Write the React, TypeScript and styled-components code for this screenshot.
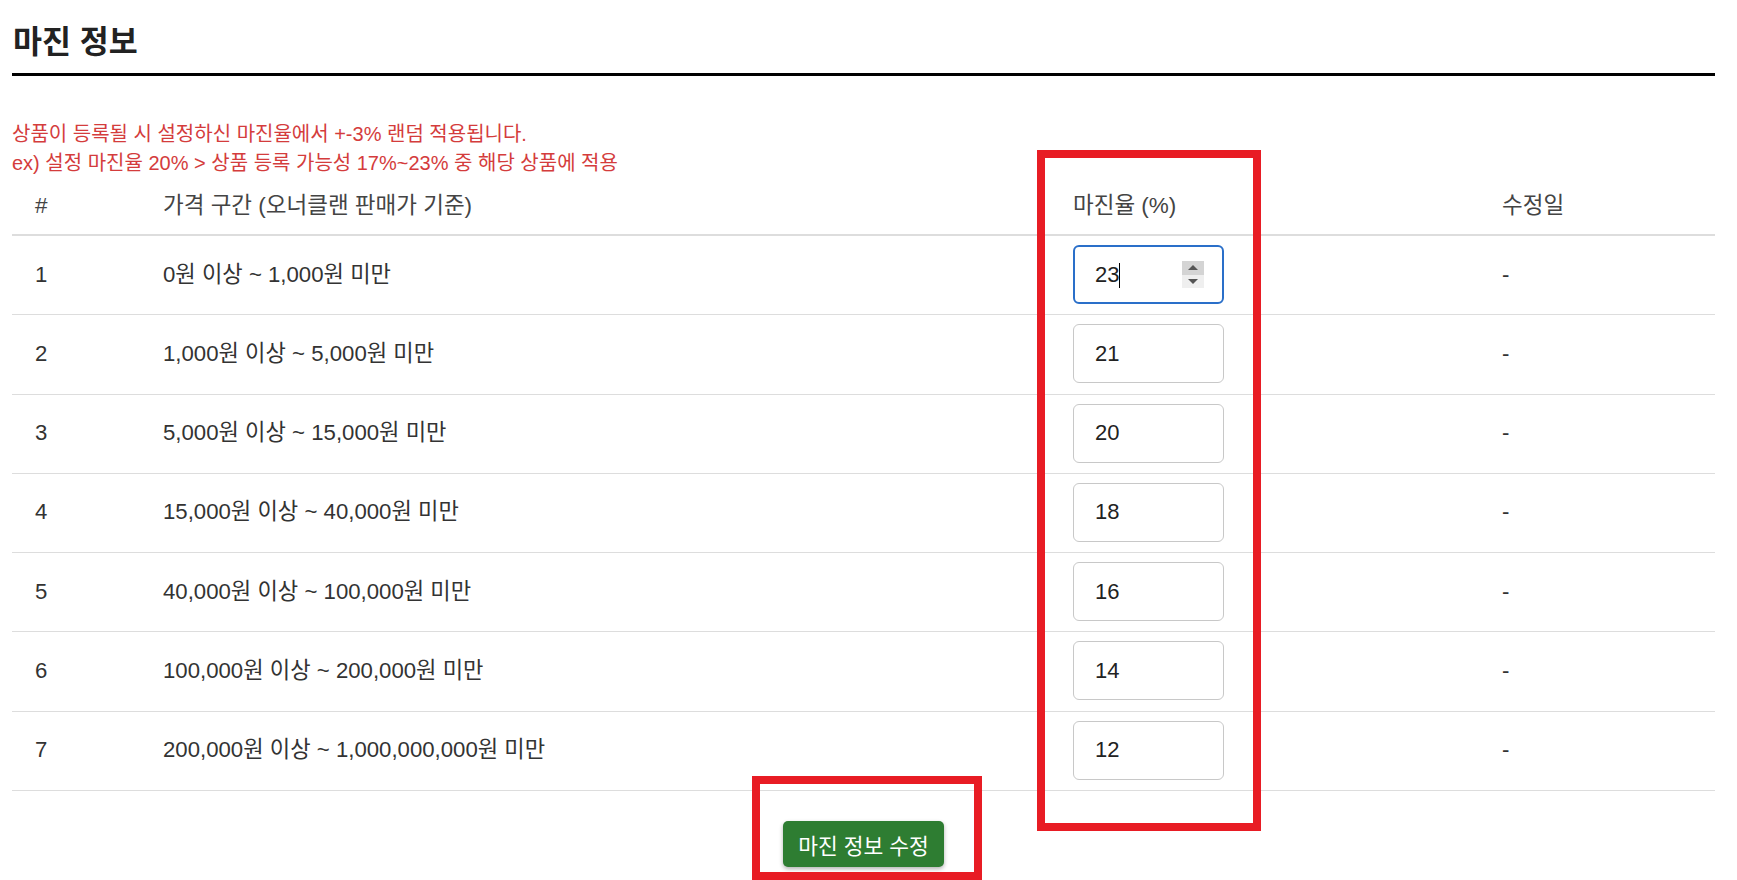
import styled, { createGlobalStyle } from 'styled-components';

const GlobalStyle = createGlobalStyle`
  body {
    margin: 0;
    background: #fff;
    font-family: "Liberation Sans", "Noto Sans CJK KR", sans-serif;
    color: #333;
  }
`;

const Page = styled.div`
  position: relative;
  width: 1703px;
  min-height: 880px;
  padding: 0 22px 0 12px;
`;

const Title = styled.h2`
  margin: 0;
  padding: 24px 0 13px 1px;
  font-size: 31.5px;
  line-height: 36px;
  font-weight: 700;
  color: #222;
  border-bottom: 3px solid #000;
`;

const Notice = styled.div`
  margin-top: 44px;
  color: #d43c3c;
  font-size: 20px;
  line-height: 29px;
`;

const Table = styled.table`
  width: 100%;
  border-collapse: collapse;
  table-layout: fixed;
`;

const HeadCell = styled.th`
  text-align: left;
  font-weight: 400;
  color: #444;
  font-size: 22.5px;
  line-height: 30px;
  padding: 13px 0 13px 23px;
  border-bottom: 2px solid #ddd;
`;

const Cell = styled.td`
  padding: 9px 0 10.3px 23px;
  font-size: 22.2px;
  line-height: 30px;
  color: #333;
  border-bottom: 1px solid #ddd;
  vertical-align: middle;
`;

const InputWrap = styled.div`
  position: relative;
  display: block;
  width: 151px;
  height: 59px;
`;

const MarginInput = styled.input<{ $focused?: boolean }>`
  box-sizing: border-box;
  display: block;
  width: 151px;
  height: 59px;
  padding: 0 0 0 ${({ $focused }) => ($focused ? '20px' : '21px')};
  font-family: "Liberation Sans", sans-serif;
  font-size: 22px;
  color: #222;
  background: #fff;
  border: ${({ $focused }) => ($focused ? '2px solid #2a6fc9' : '1px solid #c8c8c8')};
  border-radius: 6px;
  outline: none;
`;

const Caret = styled.span`
  position: absolute;
  left: 46px;
  top: 18px;
  width: 1px;
  height: 25px;
  background: #000;
`;

const Spinner = styled.span`
  position: absolute;
  right: 20px;
  top: 16px;
  width: 22px;
  height: 27px;
  display: flex;
  flex-direction: column;
`;

const SpinHalf = styled.span<{ $up?: boolean }>`
  flex: 1;
  display: flex;
  align-items: center;
  justify-content: center;
  background: ${({ $up }) => ($up ? '#d4d4d4' : '#efefef')};

  &::after {
    content: '';
    border-left: 5px solid transparent;
    border-right: 5px solid transparent;
    ${({ $up }) => ($up ? 'border-bottom: 5px solid #555;' : 'border-top: 5px solid #555;')}
  }
`;

const ButtonRow = styled.div`
  display: flex;
  justify-content: center;
  padding-top: 30px;
`;

const SaveButton = styled.button`
  height: 46px;
  padding: 0 15px;
  font-family: "Liberation Sans", "Noto Sans CJK KR", sans-serif;
  font-size: 21.5px;
  color: #fff;
  background: #2e7d32;
  border: none;
  border-radius: 5px;
  box-shadow: 0 2px 4px rgba(0, 0, 0, 0.3);
  cursor: pointer;
`;

// red boxes drawn over the screenshot
const Mark = styled.div<{ $left: number; $top: number; $w: number; $h: number }>`
  position: absolute;
  box-sizing: border-box;
  left: ${({ $left }) => $left}px;
  top: ${({ $top }) => $top}px;
  width: ${({ $w }) => $w}px;
  height: ${({ $h }) => $h}px;
  border: 8px solid #e81c24;
  pointer-events: none;
`;

const rows = [
  { range: '0원 이상 ~ 1,000원 미만', margin: '23' },
  { range: '1,000원 이상 ~ 5,000원 미만', margin: '21' },
  { range: '5,000원 이상 ~ 15,000원 미만', margin: '20' },
  { range: '15,000원 이상 ~ 40,000원 미만', margin: '18' },
  { range: '40,000원 이상 ~ 100,000원 미만', margin: '16' },
  { range: '100,000원 이상 ~ 200,000원 미만', margin: '14' },
  { range: '200,000원 이상 ~ 1,000,000,000원 미만', margin: '12' },
];

export default function App() {
  return (
    <Page>
      <GlobalStyle />
      <Title>마진 정보</Title>
      <Notice>
        상품이 등록될 시 설정하신 마진율에서 +-3% 랜덤 적용됩니다.
        <br />
        ex) 설정 마진율 20% &gt; 상품 등록 가능성 17%~23% 중 해당 상품에 적용
      </Notice>

      <Table>
        <colgroup>
          <col style={{ width: 128 }} />
          <col style={{ width: 910 }} />
          <col style={{ width: 429 }} />
          <col style={{ width: 236 }} />
        </colgroup>
        <thead>
          <tr>
            <HeadCell>#</HeadCell>
            <HeadCell>가격 구간 (오너클랜 판매가 기준)</HeadCell>
            <HeadCell>마진율 (%)</HeadCell>
            <HeadCell>수정일</HeadCell>
          </tr>
        </thead>
        <tbody>
          {rows.map((row, i) => (
            <tr key={i}>
              <Cell>{i + 1}</Cell>
              <Cell>{row.range}</Cell>
              <Cell>
                <InputWrap>
                  <MarginInput $focused={i === 0} defaultValue={row.margin} />
                  {i === 0 && (
                    <>
                      <Caret />
                      <Spinner>
                        <SpinHalf $up />
                        <SpinHalf />
                      </Spinner>
                    </>
                  )}
                </InputWrap>
              </Cell>
              <Cell>-</Cell>
            </tr>
          ))}
        </tbody>
      </Table>

      <ButtonRow>
        <SaveButton>마진 정보 수정</SaveButton>
      </ButtonRow>

      <Mark $left={1037} $top={150} $w={224} $h={681} />
      <Mark $left={752} $top={776} $w={230} $h={104} />
    </Page>
  );
}
